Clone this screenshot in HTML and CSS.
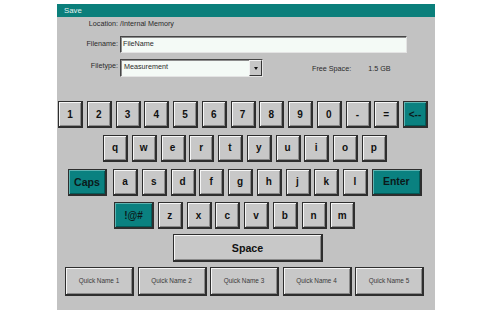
FILE: index.html
```html
<!DOCTYPE html>
<html lang="en">
<head>
  <meta charset="UTF-8" />
  <meta name="viewport" content="width=device-width, initial-scale=1.0"/>
  <title>Save</title>
  <link rel="stylesheet" href="styles.css">
</head>
<body>

  <div class="dialog">
    <div class="titlebar">Save</div>

    <div class="form">
      <div class="line location">
        <span class="lbl">Location:</span>
        <span>/Internal Memory</span>
      </div>
      <div class="line filename">
        <label class="lbl" for="fname">Filename:</label>
        <div class="field" id="fname">FileName</div>
      </div>
      <div class="line filetype">
        <label class="lbl">Filetype:</label>
        <div class="select">
          <span class="select-text">Measurement</span>
          <span class="drop"><i class="arrow"></i></span>
        </div>
        <span class="free">Free Space:</span>
        <span class="size">1.5 GB</span>
      </div>
    </div>

    <div class="keyboard">
      <div class="krow row-num">
        <button class="key">1</button>
        <button class="key">2</button>
        <button class="key">3</button>
        <button class="key">4</button>
        <button class="key">5</button>
        <button class="key">6</button>
        <button class="key">7</button>
        <button class="key">8</button>
        <button class="key">9</button>
        <button class="key">0</button>
        <button class="key">-</button>
        <button class="key">=</button>
        <button class="key teal back">&lt;--</button>
      </div>
      <div class="krow row-q">
        <button class="key">q</button>
        <button class="key">w</button>
        <button class="key">e</button>
        <button class="key">r</button>
        <button class="key">t</button>
        <button class="key">y</button>
        <button class="key">u</button>
        <button class="key">i</button>
        <button class="key">o</button>
        <button class="key">p</button>
      </div>
      <div class="krow row-a">
        <button class="key teal caps">Caps</button>
        <button class="key">a</button>
        <button class="key">s</button>
        <button class="key">d</button>
        <button class="key">f</button>
        <button class="key">g</button>
        <button class="key">h</button>
        <button class="key">j</button>
        <button class="key">k</button>
        <button class="key">l</button>
        <button class="key teal enter">Enter</button>
      </div>
      <div class="krow row-z">
        <button class="key teal sym">!@#</button>
        <button class="key">z</button>
        <button class="key">x</button>
        <button class="key">c</button>
        <button class="key">v</button>
        <button class="key">b</button>
        <button class="key">n</button>
        <button class="key">m</button>
      </div>
      <div class="krow row-space">
        <button class="key space">Space</button>
      </div>
      <div class="krow row-quick">
        <button class="key quick">Quick Name 1</button>
        <button class="key quick">Quick Name 2</button>
        <button class="key quick">Quick Name 3</button>
        <button class="key quick">Quick Name 4</button>
        <button class="key quick">Quick Name 5</button>
      </div>
    </div>
  </div>

</body>
</html>
```

FILE: styles.css
```css
body {
  margin: 0;
  background: #fff;
  font-family: "Liberation Sans", Arial, sans-serif;
}
.dialog {
  width: 378px;
  height: 306px;
  margin: 4px 0 0 57px;
  background: #c2c2c2;
  display: flex;
  flex-direction: column;
}
.titlebar {
  height: 13px;
  line-height: 13px;
  background: #0b7f7b;
  color: #e4f1f0;
  font-size: 7.8px;
  padding-left: 7px;
}
.form {
  padding-top: 1px;
  display: flex;
  flex-direction: column;
  font-size: 7.2px;
  color: #2a2a2a;
}
.line {
  display: flex;
  align-items: center;
}
.lbl {
  width: 61px;
  margin-right: 2px;
  text-align: right;
}
.location {
  height: 11px;
}
.filename {
  margin-top: 7px;
  height: 17px;
}
.filename .lbl {
  margin-top: -2px;
}
.filetype {
  margin-top: 6px;
  height: 18px;
}
.filetype .lbl {
  margin-top: -6px;
}
.field {
  box-sizing: border-box;
  width: 287px;
  height: 17px;
  padding: 0 0 3px 2px;
  display: flex;
  align-items: center;
  background: #f4faf6;
  border: 1px solid #e4e4e4;
  border-top-color: #454545;
  border-left-color: #454545;
  box-shadow: inset 1px 1px 0 #8c8c8c;
}
.select {
  box-sizing: border-box;
  width: 143px;
  height: 18px;
  display: flex;
  background: #f4faf6;
  border: 1px solid #e4e4e4;
  border-top-color: #454545;
  border-left-color: #454545;
  box-shadow: inset 1px 1px 0 #8c8c8c;
}
.select-text {
  flex: 1;
  padding: 2px 0 0 3px;
}
.drop {
  box-sizing: border-box;
  width: 13px;
  background: #c6c6c6;
  border: 1px solid #333;
  border-top-color: #f0f0f0;
  border-left-color: #f0f0f0;
  display: flex;
  align-items: center;
  justify-content: center;
}
.arrow {
  width: 0;
  height: 0;
  border-left: 2px solid transparent;
  border-right: 2px solid transparent;
  border-top: 3px solid #111;
}
.free {
  margin-left: 49px;
}
.size {
  margin-left: 17px;
}
.keyboard {
  margin-top: 24px;
  display: flex;
  flex-direction: column;
  gap: 6.75px;
}
.krow {
  display: flex;
  gap: 3.75px;
}
.row-num { padding-left: 1px; }
.row-q { padding-left: 46px; }
.row-a { padding-left: 11px; }
.row-z { padding-left: 57px; }
.row-space {
  padding-left: 116px;
  margin-top: -2px;
}
.row-quick {
  padding-left: 8px;
  gap: 3.5px;
  margin-top: -2px;
}
.key {
  box-sizing: border-box;
  width: 25px;
  height: 27px;
  padding: 0;
  margin: 0;
  background: #c8c8c8;
  color: #111;
  font-family: "Liberation Sans", Arial, sans-serif;
  font-size: 10px;
  font-weight: 700;
  border: 1px solid #2e2e2e;
  border-right-width: 2px;
  border-bottom-width: 2px;
  box-shadow: inset 1px 1px 0 #f6f6f6, inset -1px -1px 0 #8a8a8a;
  display: flex;
  align-items: center;
  justify-content: center;
}
.teal {
  background: #0a8180;
  color: #0b1a1a;
  box-shadow: inset 1px 1px 0 #5fb3b1, inset -1px -1px 0 #045a58;
}
.caps {
  width: 39px;
  margin-right: 2.25px;
  font-size: 10.6px;
}
.enter {
  width: 50px;
  font-size: 10.4px;
}
.sym {
  width: 40px;
}
.space {
  width: 150px;
  height: 28px;
  font-size: 10.7px;
}
.quick {
  width: 69px;
  height: 29px;
  font-size: 6.4px;
  font-weight: 400;
  color: #3a3a3a;
}
```
